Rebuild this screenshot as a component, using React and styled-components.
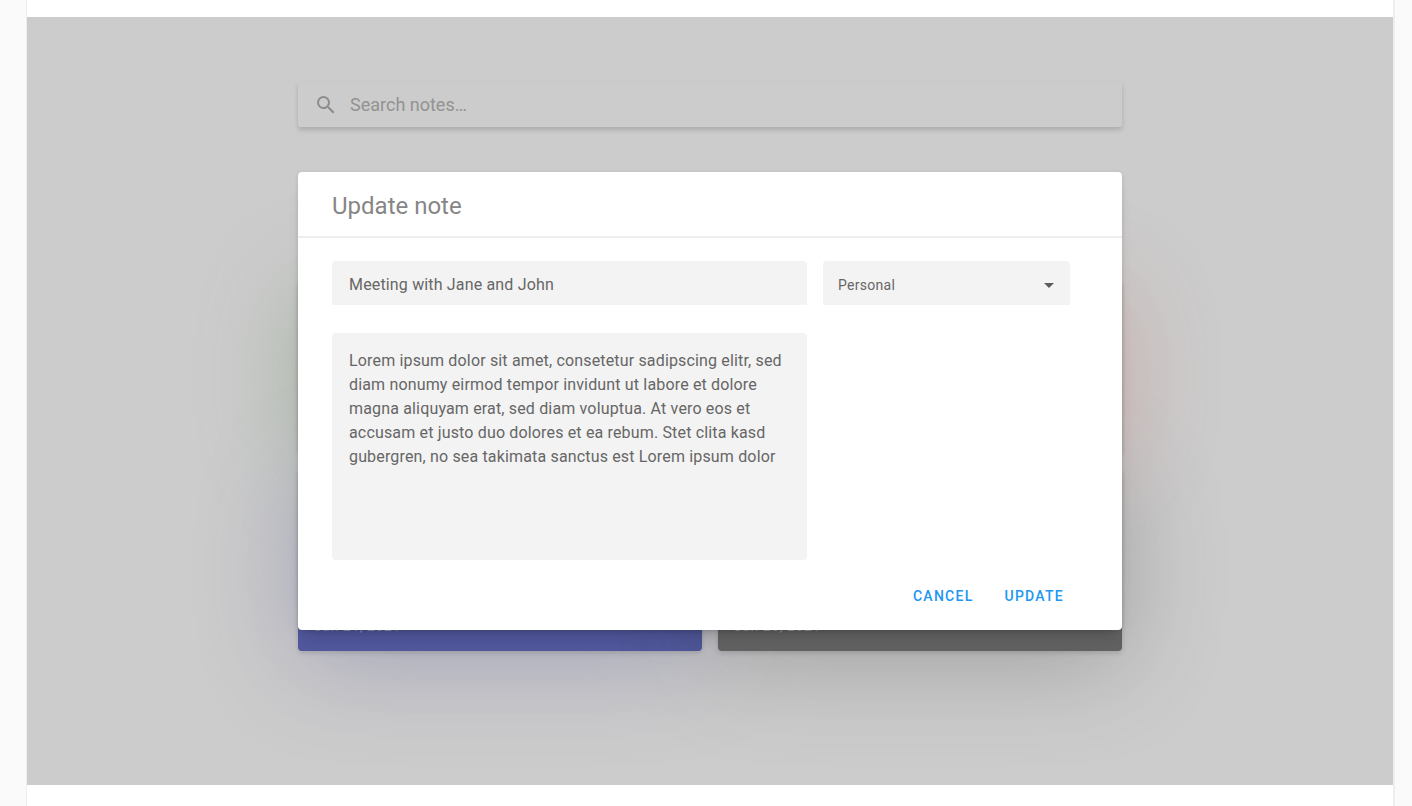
import React from "react";
import styled, { createGlobalStyle } from "styled-components";

const GlobalStyle = createGlobalStyle`
  *, *::before, *::after { box-sizing: border-box; }
  body {
    margin: 0;
    background: #fafafa;
    font-family: Roboto, "Liberation Sans", sans-serif;
    -webkit-font-smoothing: antialiased;
  }
  button, input, textarea, select { font-family: inherit; margin: 0; }
`;

const Frame = styled.div`
  min-height: 100vh;
  margin: 0 17px 0 26px;
  padding: 17px 0 21px;
  background: #fff;
  border: solid #eee;
  border-width: 0 2px 0 1px;
`;

const Stage = styled.div`
  display: grid;
  grid-template: minmax(768px, auto) / minmax(0, 1fr);
  overflow: hidden;
  > * { grid-area: 1 / 1; }
`;

const Notes = styled.main`
  width: 100%;
  max-width: 824px;
  margin: 0 auto;
  padding: 65px 0;
  display: flex;
  flex-direction: column;
  gap: 154px;
`;

const SearchBar = styled.label`
  display: flex;
  align-items: center;
  gap: 12px;
  height: 45px;
  padding: 0 16px;
  border-radius: 2px;
  box-shadow: 0 3px 5px rgba(0, 0, 0, 0.16);
  svg { width: 24px; height: 24px; fill: #b0b0b0; flex: none; }
`;

const SearchInput = styled.input`
  flex: 1;
  min-width: 0;
  padding: 0;
  border: 0;
  outline: 0;
  background: none;
  font-size: 18px;
  line-height: 24px;
  &::placeholder { color: #b8b8b8; opacity: 1; }
`;

const CardGrid = styled.div`
  display: grid;
  grid-template-columns: 1fr 1fr;
  gap: 16px;
`;

const Card = styled.article`
  display: flex;
  align-items: flex-end;
  height: ${(p) => (p.$tall ? 182 : 172)}px;
  padding: 16px 16px 17px;
  border-radius: 4px;
  background: ${(p) => p.$color};
  box-shadow: 0 2px 5px rgba(0, 0, 0, 0.14), 0 10px 100px ${(p) => p.$glow};
  color: rgba(255, 255, 255, 0.5);
  font-size: 14px;
  line-height: 16px;
  letter-spacing: 0.04em;
`;

const Scrim = styled.div`
  z-index: 1;
  display: flex;
  align-items: center;
  justify-content: center;
  background: rgba(0, 0, 0, 0.2);
`;

const Dialog = styled.form`
  width: 100%;
  max-width: 824px;
  border-radius: 4px;
  background: #fff;
  box-shadow: 0 11px 15px -7px rgba(0, 0, 0, 0.2), 0 1px 4px rgba(0, 0, 0, 0.12);
`;

const DialogTitle = styled.h2`
  margin: 0;
  padding: 19px 34px 14px;
  border-bottom: 2px solid #eee;
  color: #868686;
  font-size: 24px;
  font-weight: 400;
  line-height: 31px;
`;

const Fields = styled.div`
  display: grid;
  grid-template-columns: minmax(0, 475fr) minmax(0, 247fr);
  gap: 28px 16px;
  padding: 23px 52px 0 34px;
`;

const TextInput = styled.input`
  height: 44px;
  padding: 2px 17px 0;
  border: 0;
  border-radius: 4px 4px 0 0;
  outline: 0;
  background: #f3f3f3;
  color: #666;
  font-size: 16px;
  letter-spacing: 0.01em;
`;

const TextArea = styled.textarea`
  height: 227px;
  padding: 16px 17px;
  border: 0;
  border-radius: 4px;
  outline: 0;
  resize: none;
  background: #f3f3f3;
  color: #666;
  font-size: 16px;
  line-height: 24px;
  letter-spacing: 0.01em;
`;

const SelectBox = styled.div`
  position: relative;
  display: grid;
  svg {
    position: absolute;
    right: 9px;
    top: 12px;
    width: 24px;
    height: 24px;
    fill: #5c5c5c;
    pointer-events: none;
  }
`;

const Select = styled.select`
  appearance: none;
  height: 44px;
  padding: 4px 40px 0 15px;
  border: 0;
  border-radius: 4px 4px 0 0;
  outline: 0;
  background: #f3f3f3;
  color: #666;
  font-size: 14px;
  letter-spacing: 0.02em;
`;

const Actions = styled.div`
  display: flex;
  justify-content: flex-end;
  gap: 15px;
  padding: 18px 50px 16px;
`;

const TextButton = styled.button`
  height: 36px;
  padding: 0 8px;
  border: 0;
  border-radius: 4px;
  background: none;
  color: #2196f3;
  font-size: 14px;
  font-weight: 500;
  letter-spacing: 0.09em;
  text-transform: uppercase;
`;

const notes = [
  { color: "#66bb6a", glow: "rgba(102, 150, 90, 0.32)" },
  { color: "#ffb74d", glow: "rgba(215, 70, 60, 0.24)" },
  { color: "#646dc2", glow: "rgba(84, 84, 170, 0.3)", date: "Jan 21, 2021" },
  { color: "#7a7a7a", glow: "rgba(70, 70, 70, 0.3)", date: "Jan 20, 2021" },
];

export default function App() {
  return (
    <>
      <GlobalStyle />
      <Frame>
        <Stage>
          <Notes>
            <SearchBar>
              <svg viewBox="0 0 24 24" aria-hidden="true">
                <path d="M15.5 14h-.79l-.28-.27A6.471 6.471 0 0 0 16 9.5 6.5 6.5 0 1 0 9.5 16c1.61 0 3.09-.59 4.23-1.57l.27.28v.79l5 4.99L20.49 19l-4.99-5zm-6 0C7.01 14 5 11.99 5 9.5S7.01 5 9.5 5 14 7.01 14 9.5 11.99 14 9.5 14z" />
              </svg>
              <SearchInput type="search" aria-label="Search notes" placeholder="Search notes…" />
            </SearchBar>
            <CardGrid>
              {notes.map((n) => (
                <Card key={n.color} $color={n.color} $glow={n.glow} $tall={Boolean(n.date)}>
                  {n.date && <time>{n.date}</time>}
                </Card>
              ))}
            </CardGrid>
          </Notes>
          <Scrim>
            <Dialog role="dialog" aria-labelledby="dialog-title" onSubmit={(e) => e.preventDefault()}>
              <DialogTitle id="dialog-title">Update note</DialogTitle>
              <Fields>
                <TextInput aria-label="Title" defaultValue="Meeting with Jane and John" />
                <SelectBox>
                  <Select aria-label="Category" defaultValue="Personal">
                    <option>Personal</option>
                  </Select>
                  <svg viewBox="0 0 24 24" aria-hidden="true">
                    <path d="M7 10l5 5 5-5z" />
                  </svg>
                </SelectBox>
                <TextArea
                  aria-label="Note"
                  defaultValue="Lorem ipsum dolor sit amet, consetetur sadipscing elitr, sed diam nonumy eirmod tempor invidunt ut labore et dolore magna aliquyam erat, sed diam voluptua. At vero eos et accusam et justo duo dolores et ea rebum. Stet clita kasd gubergren, no sea takimata sanctus est Lorem ipsum dolor"
                />
              </Fields>
              <Actions>
                <TextButton type="button">Cancel</TextButton>
                <TextButton type="submit">Update</TextButton>
              </Actions>
            </Dialog>
          </Scrim>
        </Stage>
      </Frame>
    </>
  );
}
